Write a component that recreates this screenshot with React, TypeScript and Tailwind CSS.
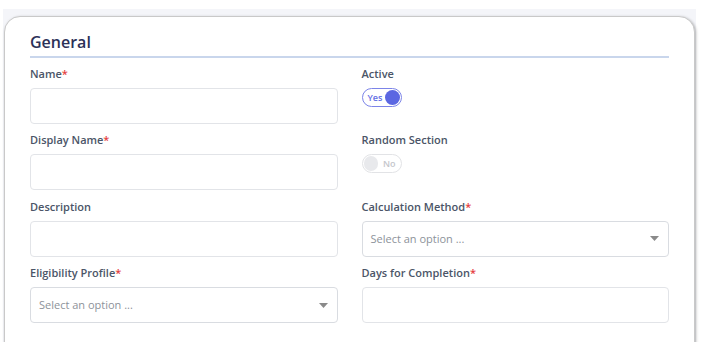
import React from "react";

const Label = ({ text, req }: { text: string; req?: boolean }) => (
  <div className="h-4 text-[11px] leading-4 font-semibold text-[#4b5567]">
    {text}
    {req && <span className="text-[#e53e3e]">*</span>}
  </div>
);

const Input = () => (
  <div className="mt-[6px] h-[36px] rounded-[4px] border border-[#e2e4e8] bg-white" />
);

const Select = () => (
  <div className="mt-[6px] h-[36px] rounded-[4px] border border-[#d9dce1] bg-white flex items-center justify-between pl-2 pr-[8px]">
    <span className="text-[11px] text-[#8d929a]">Select an option ...</span>
    <svg width="9" height="5" viewBox="0 0 9 5" className="mr-[1px]">
      <path d="M0 0 L9 0 L4.5 5 Z" fill="#8a8a8a" />
    </svg>
  </div>
);

const SwitchOn = () => (
  <div className="mt-[6px] h-[36px]">
    <div className="w-[40px] h-[19px] rounded-full border border-[#7c84e8] flex items-center justify-between pl-[5px] pr-[1px] bg-white">
      <span className="text-[9px] font-semibold text-[#6470e4] leading-none">Yes</span>
      <span className="w-[15px] h-[15px] rounded-full bg-[#5b67e2]" />
    </div>
  </div>
);

const SwitchOff = () => (
  <div className="mt-[6px] h-[36px]">
    <div className="w-[40px] h-[19px] rounded-full border border-[#e2e3e6] flex items-center pl-[1px] pr-[5px] gap-[5px] bg-white">
      <span className="w-[15px] h-[15px] rounded-full bg-[#e8e9ec]" />
      <span className="text-[9px] font-semibold text-[#c4c6cb] leading-none">No</span>
    </div>
  </div>
);

export default function App() {
  return (
    <div
      className="w-[702px] h-[342px] bg-white overflow-hidden pt-[9px]"
      style={{ fontFamily: '"Open Sans", "Noto Sans", sans-serif' }}
    >
      <div className="ml-[3px] mr-[6px] h-[400px] bg-[#f4f5f9] pt-[7px] pl-[1px] pr-[1px]">
        <div className="h-[400px] rounded-t-[16px] border border-[#c9c9c9] bg-white shadow-[1px_1px_3px_rgba(0,0,0,0.3)] pl-[25px] pr-[25px] pt-[13px]">
          <div className="border-b-2 border-[#c9d6ec] pb-[2px]">
            <div className="text-[16px] leading-6 font-semibold text-[#2c3158]">General</div>
          </div>
          <div className="mt-[8px] grid grid-cols-2 gap-x-6 gap-y-[8.4px]">
            <div>
              <Label text="Name" req />
              <Input />
            </div>
            <div>
              <Label text="Active" />
              <SwitchOn />
            </div>
            <div>
              <Label text="Display Name" req />
              <Input />
            </div>
            <div>
              <Label text="Random Section" />
              <SwitchOff />
            </div>
            <div>
              <Label text="Description" />
              <Input />
            </div>
            <div>
              <Label text="Calculation Method" req />
              <Select />
            </div>
            <div>
              <Label text="Eligibility Profile" req />
              <Select />
            </div>
            <div>
              <Label text="Days for Completion" req />
              <Input />
            </div>
          </div>
        </div>
      </div>
    </div>
  );
}
